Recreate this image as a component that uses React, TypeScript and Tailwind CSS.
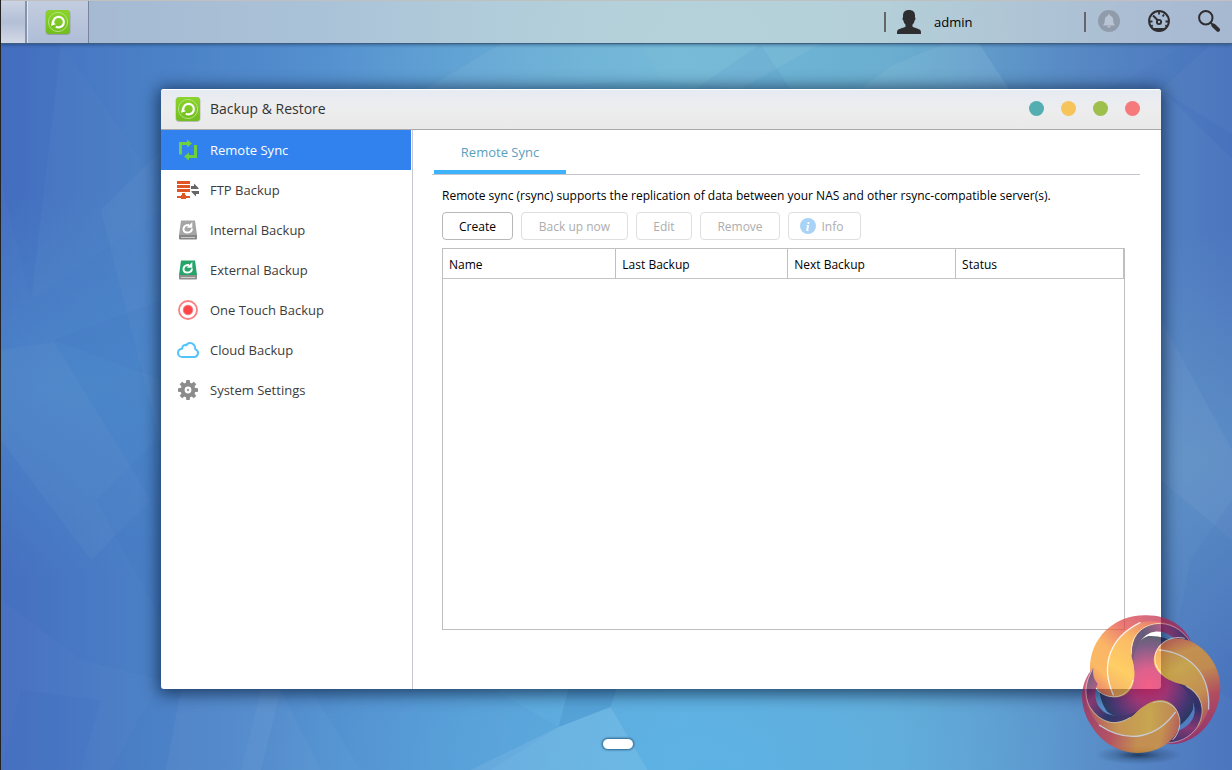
import type { ComponentType } from "react";

function AppIcon() {
  return (
    <svg width="26" height="26" viewBox="0 0 26 26" fill="none" aria-hidden="true">
      <defs>
        <linearGradient id="app-green" x1="0" y1="0" x2="0" y2="1">
          <stop offset="0" stopColor="#8ad42a" />
          <stop offset="1" stopColor="#72bd20" />
        </linearGradient>
      </defs>
      <rect x="0.5" y="1" width="25" height="25" rx="4" fill="#5c6b50" opacity="0.35" />
      <rect x="1" y="1" width="24" height="24" rx="3.5" fill="url(#app-green)" />
      <circle cx="13" cy="13" r="9.6" stroke="#b4e27c" strokeWidth="1" />
      <path d="M8.3 13.600A5.300 5.300 0 1 1 10.800 17.600" stroke="#fff" strokeWidth="2.200" />
      <path d="M6 16.800l1-4.800 3.800 3.200z" fill="#fff" />
    </svg>
  );
}

function SyncIcon() {
  return (
    <svg width="22" height="22" viewBox="0 0 22 22" fill="#6fcf3c" aria-hidden="true">
      <path d="M2 3h8V0.500l5 4-5 4V6H5v9.500H2z" />
      <path d="M20 19h-8v2.500l-5-4 5-4V16h5V6h3z" />
    </svg>
  );
}

function FtpIcon() {
  return (
    <svg width="22" height="22" viewBox="0 0 22 22" aria-hidden="true">
      <path d="M0 2h13v3H0zM0 6h13v3H0zM0 10h13v3H0zM5 14h3v2h1v1h4v2H9v1H4v-1H0v-2h4v-1h1z" fill="#df5523" />
      <path d="M14 7h3V4.500L21.500 9v1H14zM22 15h-3v2.500L14.500 13v-1H22z" fill="#666" />
    </svg>
  );
}

function DriveIcon({ top, base, slot }: { top: string; base: string; slot: string }) {
  return (
    <svg width="22" height="22" viewBox="0 0 22 22" fill="none" aria-hidden="true">
      <path d="M4 1.500h14l2 14.500H2z" fill={top} />
      <path d="M2 16h18v3.500q0 1-1 1H3q-1 0-1-1z" fill={base} />
      <path d="M4 18.500h14" stroke={slot} />
      <path d="M15 9.500c-.2 2.600-2 4-4.300 4-2.500 0-4.200-1.500-4.200-3.600 0-2.400 2.200-4 5.500-3.900" stroke="#fff" strokeWidth="2" />
      <path d="M15.300 3v5.800H9.800z" fill="#fff" />
    </svg>
  );
}

const InternalIcon = () => <DriveIcon top="#a5a5a5" base="#868686" slot="#c9c9c9" />;
const ExternalIcon = () => <DriveIcon top="#25a56a" base="#8e8e8e" slot="#d0d0d0" />;

function TouchIcon() {
  return (
    <svg width="22" height="22" viewBox="0 0 22 22" fill="none" aria-hidden="true">
      <circle cx="11" cy="11" r="9" stroke="#f97f82" strokeWidth="1.800" />
      <circle cx="11" cy="11" r="4.800" fill="#fb4549" stroke="#f97f82" />
    </svg>
  );
}

function CloudIcon() {
  return (
    <svg width="22" height="22" viewBox="0 0 22 22" fill="none" aria-hidden="true">
      <path
        d="M5.200 18h12a3.900 3.900 0 0 0 1.100-7.600C18.600 6.400 15.800 4 13 4c-1.500 0-2.900.8-3.500 2.200C7.200 5.400 5 6.900 5.200 9.700 2.600 10 1 11.700 1 13.900 1 16.200 2.800 18 5.200 18z"
        stroke="#55c3fb"
        strokeWidth="2"
        strokeLinejoin="round"
      />
    </svg>
  );
}

function GearIcon() {
  return (
    <svg width="22" height="22" viewBox="0 0 22 22" fill="none" aria-hidden="true">
      <circle cx="11" cy="11" r="5.400" stroke="#8c8c8c" strokeWidth="4" />
      <g fill="#8c8c8c">
        {[0, 45, 90, 135, 180, 225, 270, 315].map((a) => (
          <path key={a} d="M8.800 5L9.300 1h3.400l.5 4z" transform={`rotate(${a} 11 11)`} />
        ))}
      </g>
      <circle cx="11" cy="11" r="1.200" fill="#a0a0a0" />
    </svg>
  );
}

function UserIcon() {
  return (
    <svg width="24" height="24" viewBox="0 0 24 24" fill="#2e2e31" aria-hidden="true">
      <path d="M12 0c4 0 6 2.200 6 5.500v2c.8.3.7 2.500-.4 3-.3 2-1 3.100-2.100 4v2.200c1 1 7 1.800 8.100 3.700.4.700.4 2 .4 3.600H0c0-1.600 0-2.900.4-3.600 1.100-1.900 7.100-2.700 8.100-3.700v-2.200c-1.100-.9-1.800-2-2.100-4-1.100-.5-1.200-2.700-.4-3v-2C6 2.200 8 0 12 0z" />
    </svg>
  );
}

function BellIcon() {
  return (
    <svg width="22" height="22" viewBox="0 0 22 22" aria-hidden="true">
      <circle cx="11" cy="11" r="11" fill="#909cab" />
      <path d="M11 4.500c.8 0 1.200.5 1.200 1.200 2.200.6 3 2.300 3 4.500 0 2.500.4 3.500 1.500 4.500v.8H5.300v-.8c1.100-1 1.500-2 1.500-4.500 0-2.200.8-3.900 3-4.500 0-.7.400-1.200 1.200-1.200zM9.500 16h3c0 1-.7 1.500-1.500 1.500S9.500 17 9.500 16z" fill="#b8c4d3" />
    </svg>
  );
}

function GaugeIcon() {
  return (
    <svg width="22" height="22" viewBox="0 0 22 22" fill="none" stroke="#2e2e31" aria-hidden="true">
      <circle cx="11" cy="11" r="9.900" strokeWidth="2" />
      <path d="M3.500 18h15A10 10 0 0 1 11 21.500 10 10 0 0 1 3.500 18z" fill="#2e2e31" stroke="none" />
      <path d="M11 2v2.500M2 11.500h2.500M17.500 11.500H20M16 4.500l-1.400 2M17.300 15.300l1.200 1M4.700 15.300l-1.200 1" strokeWidth="1.800" />
      <path d="M5 5.500l5 5" strokeWidth="1.900" />
      <circle cx="11" cy="12" r="2.100" strokeWidth="1.900" />
    </svg>
  );
}

function SearchIcon() {
  return (
    <svg width="22" height="22" viewBox="0 0 22 22" fill="none" stroke="#2e2e31" aria-hidden="true">
      <circle cx="7.800" cy="7.800" r="6.700" strokeWidth="2" />
      <path d="M12.500 12.500l3 3" strokeWidth="2" />
      <path d="M15.500 15.500l4.500 4.300" strokeWidth="4" strokeLinecap="round" />
    </svg>
  );
}

// Faceted desktop wallpaper, stretched over the whole page
function Wallpaper() {
  return (
    <svg className="absolute inset-0 h-full w-full" viewBox="0 0 1232 770" preserveAspectRatio="none" aria-hidden="true">
      <defs>
        <linearGradient id="wp-base" x1="0" y1="0" x2="1" y2="0">
          <stop offset="0" stopColor="#466fc0" />
          <stop offset="0.12" stopColor="#4a80c6" />
          <stop offset="0.3" stopColor="#5794d1" />
          <stop offset="0.55" stopColor="#65b0da" />
          <stop offset="0.72" stopColor="#67a9cf" />
          <stop offset="0.88" stopColor="#5a8bc5" />
          <stop offset="1" stopColor="#4c76bf" />
        </linearGradient>
        <radialGradient id="wp-top" cx="0.56" cy="0.06" r="0.3">
          <stop offset="0" stopColor="#76bcd2" stopOpacity="0.6" />
          <stop offset="1" stopColor="#76bcd2" stopOpacity="0" />
        </radialGradient>
        <radialGradient id="wp-bottom" cx="0.58" cy="1" r="0.36">
          <stop offset="0" stopColor="#5cb2e6" stopOpacity="0.9" />
          <stop offset="1" stopColor="#5cb2e6" stopOpacity="0" />
        </radialGradient>
        <radialGradient id="wp-right" cx="0.97" cy="0.6" r="0.3">
          <stop offset="0" stopColor="#6498c8" stopOpacity="0.7" />
          <stop offset="1" stopColor="#6498c8" stopOpacity="0" />
        </radialGradient>
        <radialGradient id="wp-left" cx="0.05" cy="0.5" r="0.25">
          <stop offset="0" stopColor="#4c8acb" stopOpacity="0.8" />
          <stop offset="1" stopColor="#4c8acb" stopOpacity="0" />
        </radialGradient>
      </defs>
      <path d="M0 0h1232v770H0z" fill="url(#wp-base)" />
      <path d="M0 0h1232v770H0z" fill="url(#wp-top)" />
      <path d="M0 0h1232v770H0z" fill="url(#wp-bottom)" />
      <path d="M0 0h1232v770H0z" fill="url(#wp-right)" />
      <path d="M0 0h1232v770H0z" fill="url(#wp-left)" />
      <g fill="#fff">
        <path d="M60 44l110 160L30 300z" opacity="0.015" />
        <path d="M0 350l53-8 97 158-60 60L0 440z" opacity="0.03" />
        <path d="M100 210l61-60v300z" opacity="0.03" />
        <path d="M180 690h100l-20 80H165z" opacity="0.04" />
        <path d="M558 727l52-20 37 63H470z" opacity="0.09" />
        <path d="M500 44h140l20 36-240 12z" opacity="0.05" />
        <path d="M640 44h180l-80 45-80-9z" opacity="0.06" />
        <path d="M893 65l50-21h36l30 45H860z" opacity="0.06" />
        <path d="M1161 90l50-46h21v90z" opacity="0.03" />
        <path d="M1161 320l71 130v90l-71-60z" opacity="0.04" />
        <path d="M280 690h-20l-20 80h80z" opacity="0.03" />
        <path d="M0 600l80 60 80 20-50 90H0z" opacity="0.02" />
      </g>
      <g fill="#1c4fa8">
        <path d="M0 44h60L30 300 0 180z" opacity="0.04" />
        <path d="M53 340l108-40v80z" opacity="0.04" />
        <path d="M568 689h48l-6 18-52 20z" opacity="0.12" />
        <path d="M310 689l50 81h130l68-43-65-38z" opacity="0.04" />
        <path d="M760 44l30 45h-95z" opacity="0.05" />
        <path d="M979 44l30 45h100l72-41z" opacity="0.04" />
        <path d="M1181 48l-72 41h52l71 70V44z" opacity="0.08" />
        <path d="M95 500l60-60 6 180z" opacity="0.04" />
        <path d="M1190 560l42-60v200l-60-40z" opacity="0.06" />
        <path d="M20 690l80 10-20 70H0z" opacity="0.05" />
      </g>
    </svg>
  );
}

function KnotBlade({ angle }: { angle: number }) {
  return (
    <g transform={`rotate(${angle} 268 257)`}>
      <path
        d="M397 138C376 82 322 56 262 75 222 96 208 140 218 195 222 150 240 112 270 99 300 86 336 102 350 126 366 122 384 126 397 138z"
        fill="url(#knot-ring)"
      />
      <path
        d="M90 205C90 116 160 46 255 46 326 44 382 82 398 138 368 84 314 58 265 76 222 96 205 140 217 180 230 224 226 290 165 292 120 290 92 255 90 205z"
        fill="url(#knot-blade)"
      />
      <path d="M165 289C120 210 145 115 240 68 290 58 330 68 352 86 310 64 280 70 262 77 222 96 205 140 217 180 230 224 226 290 165 289z" fill="url(#knot-fold)" />
      <path d="M160 285C122 200 145 115 240 68" stroke="#fff" strokeWidth="4" strokeLinecap="round" fill="none" opacity="0.85" />
      <path d="M214 160C210 110 245 72 300 70" stroke="#ffe28a" strokeWidth="3" fill="none" opacity="0.8" />
      <path d="M300 70C345 72 375 98 394 132" stroke="#fff" strokeWidth="2" fill="none" opacity="0.7" />
      <path d="M92 236C104 276 140 296 175 289 200 282 214 262 219 240" stroke="#fff0c0" strokeWidth="3" fill="none" opacity="0.8" />
    </g>
  );
}

function KnotLogo() {
  return (
    <svg
      className="pointer-events-none absolute right-0 bottom-0 z-20"
      width="172"
      height="170"
      viewBox="0 0 516 510"
      role="img"
      aria-label="Knot logo"
    >
      <defs>
        <linearGradient id="knot-blade" gradientUnits="userSpaceOnUse" x1="110" y1="290" x2="330" y2="50">
          <stop offset="0" stopColor="#dc3a30" />
          <stop offset="0.2" stopColor="#fa9a1c" />
          <stop offset="0.4" stopColor="#f8941e" />
          <stop offset="0.65" stopColor="#e03a34" />
          <stop offset="1" stopColor="#b41848" />
        </linearGradient>
        <linearGradient id="knot-fold" gradientUnits="userSpaceOnUse" x1="160" y1="290" x2="300" y2="60">
          <stop offset="0" stopColor="#f08a24" />
          <stop offset="0.3" stopColor="#ffb81c" />
          <stop offset="0.65" stopColor="#fa9a1e" />
          <stop offset="1" stopColor="#d83038" />
        </linearGradient>
        <linearGradient id="knot-ring" gradientUnits="userSpaceOnUse" x1="215" y1="170" x2="395" y2="100">
          <stop offset="0" stopColor="#4a1040" />
          <stop offset="0.3" stopColor="#1a103f" />
          <stop offset="0.65" stopColor="#a01850" />
          <stop offset="1" stopColor="#15103f" />
        </linearGradient>
        <radialGradient id="knot-core" gradientUnits="userSpaceOnUse" cx="268" cy="257" r="155">
          <stop offset="0" stopColor="#f01450" />
          <stop offset="0.35" stopColor="#c81858" />
          <stop offset="0.75" stopColor="#4a1450" />
          <stop offset="1" stopColor="#0b1a30" />
        </radialGradient>
        <radialGradient id="knot-shadow">
          <stop offset="0" stopColor="#0f2440" stopOpacity="0.75" />
          <stop offset="0.5" stopColor="#0f2440" stopOpacity="0.25" />
          <stop offset="1" stopColor="#0f2440" stopOpacity="0" />
        </radialGradient>
      </defs>
      <ellipse cx="235" cy="465" rx="130" ry="28" fill="url(#knot-shadow)" />
      <g opacity="0.68">
        <circle cx="268" cy="257" r="95" fill="url(#knot-core)" />
        {[0, 120, 240].map((a) => (
          <path
            key={a}
            d="M268 257L205 230C205 160 232 118 265 108 295 106 325 114 350 132 310 140 280 170 310 240z"
            fill="url(#knot-core)"
            transform={`rotate(${a} 268 257)`}
          />
        ))}
        <KnotBlade angle={0} />
        <KnotBlade angle={120} />
        <KnotBlade angle={240} />
      </g>
    </svg>
  );
}

const NAV_ITEMS: { label: string; icon: ComponentType }[] = [
  { label: "Remote Sync",      icon: SyncIcon },
  { label: "FTP Backup",       icon: FtpIcon },
  { label: "Internal Backup",  icon: InternalIcon },
  { label: "External Backup",  icon: ExternalIcon },
  { label: "One Touch Backup", icon: TouchIcon },
  { label: "Cloud Backup",     icon: CloudIcon },
  { label: "System Settings",  icon: GearIcon },
];

const WINDOW_BUTTONS = [
  { label: "Help",     color: "bg-[#52aeb0]" },
  { label: "Minimize", color: "bg-[#f7c35b]" },
  { label: "Maximize", color: "bg-[#9dbf4b]" },
  { label: "Close",    color: "bg-[#f6797c]" },
];

const ACTIONS = [
  { label: "Create",      width: "w-[71px]",  enabled: true },
  { label: "Back up now", width: "w-[107px]", enabled: false },
  { label: "Edit",        width: "w-[56px]",  enabled: false },
  { label: "Remove",      width: "w-[80px]",  enabled: false },
  { label: "Info",        width: "w-[73px]",  enabled: false },
];

const COLUMNS = [
  { label: "Name",        width: "w-[173px]" },
  { label: "Last Backup", width: "w-[172px]" },
  { label: "Next Backup", width: "w-[168px]" },
  { label: "Status",      width: "w-[168px]" },
];

function TopBar() {
  return (
    <header className="relative flex h-11 items-stretch border-t border-b border-t-[#bfc0bf] border-b-[#3f5f80] bg-[#e4e4de]/60 shadow-[0_1px_3px_rgba(20,50,90,0.5)]">
      <button
        aria-label="Show desktop"
        className="w-[26px] border-r-2 border-[#8793a8] bg-linear-to-b from-[#cbd4e4] via-[#b3bfd6] to-[#d3d9e6]"
      />
      <button
        aria-label="Backup & Restore"
        className="flex w-[62px] items-center justify-center border-x border-l-white/60 border-r-[#77859c] bg-linear-to-b from-[#c3cde0] to-[#b0bdd7]"
      >
        <AppIcon />
      </button>

      <div className="ml-auto flex items-center pr-3">
        <span className="h-5 w-0.5 bg-[#66666a]" />
        <button className="ml-[11px] flex w-[187px] items-center gap-[13px] text-[13px] leading-5 text-black">
          <UserIcon />
          admin
        </button>
        <span className="h-5 w-0.5 bg-[#66666a]" />
        <div className="ml-3 flex gap-7 pb-0.5">
          <button aria-label="Notifications"><BellIcon /></button>
          <button aria-label="Dashboard"><GaugeIcon /></button>
          <button aria-label="Search"><SearchIcon /></button>
        </div>
      </div>
    </header>
  );
}

function Sidebar() {
  return (
    <nav className="w-[252px] shrink-0 border-r border-[#c6c8ce] pr-px">
      {NAV_ITEMS.map(({ label, icon: Icon }, i) => (
        <a
          key={label}
          href="#"
          className={`flex h-10 items-center gap-[11px] pl-4 text-[13px] leading-5 ${
            i === 0 ? "bg-[#3182ee] text-white" : "text-[#3c3c3c]"
          }`}
        >
          <Icon />
          {label}
        </a>
      ))}
    </nav>
  );
}

function RemoteSyncPanel() {
  return (
    <section className="flex min-w-0 flex-1 flex-col pr-[21px] pl-[19px]">
      <div role="tablist" className="flex border-b border-[#c3c6d0] pl-0.5">
        <button
          role="tab"
          aria-selected="true"
          className="h-11 w-[132px] border-b-4 border-[#3eb3fb] pt-1 text-[13px] leading-5 text-[#5b9fbe]"
        >
          Remote Sync
        </button>
      </div>

      <div className="flex flex-1 flex-col pt-3 pr-[15px] pb-[59px] pl-2.5">
        <p className="text-xs leading-[18px] text-black">
          Remote sync (rsync) supports the replication of data between your NAS and other rsync-compatible server(s).
        </p>

        <div className="mt-[7px] flex gap-2">
          {ACTIONS.map(({ label, width, enabled }) => (
            <button
              key={label}
              disabled={!enabled}
              className={`flex h-7 items-center justify-center gap-1.5 rounded border text-xs ${width} ${
                enabled ? "border-[#b8b8b8] text-black" : "border-[#dedede] text-[#adadad]"
              }`}
            >
              {label === "Info" && (
                <span className="-ml-1.5 flex size-4 items-center justify-center rounded-full bg-[#a9d3f6] font-['Liberation_Serif',serif] text-[13px] leading-none font-bold text-white italic">
                  i
                </span>
              )}
              <span className="pt-0.5">{label}</span>
            </button>
          ))}
        </div>

        <div className="mt-2 flex-1 border border-[#bfbfbf]">
          <table className="table-fixed border-collapse text-xs text-black">
            <thead>
              <tr className="h-[29px] border-b border-[#c4c4c4]">
                {COLUMNS.map(({ label, width }) => (
                  <th key={label} className={`border-r border-[#bfbfbf] pt-1 pl-1.5 text-left font-normal ${width}`}>
                    {label}
                  </th>
                ))}
              </tr>
            </thead>
            <tbody />
          </table>
        </div>
      </div>
    </section>
  );
}

export default function App() {
  return (
    <div className="relative flex min-h-screen flex-col overflow-hidden border-l border-[#222] font-['Open_Sans','Noto_Sans',sans-serif]">
      <Wallpaper />
      <TopBar />

      <main className="relative flex flex-1 flex-col pt-[45px] pr-[71px] pl-40">
        <div className="flex flex-1 flex-col overflow-hidden rounded-[3px] bg-white shadow-[0_2px_16px_3px_rgba(10,30,60,0.7)]">
          <div className="flex h-[41px] items-center border-t border-b border-t-white border-b-[#a9a9a9] bg-linear-to-b from-[#e6ebf2] via-[#ededee] to-[#e9e9e9] pr-[21px] pb-0.5 pl-3.5">
            <AppIcon />
            <h1 className="ml-[9px] text-sm text-[#333]">Backup &amp; Restore</h1>
            <div className="ml-auto flex gap-[17px]">
              {WINDOW_BUTTONS.map(({ label, color }) => (
                <button key={label} aria-label={label} className={`size-[15px] rounded-full ${color}`} />
              ))}
            </div>
          </div>

          <div className="flex flex-1">
            <Sidebar />
            <RemoteSyncPanel />
          </div>
        </div>
      </main>

      <footer className="relative flex h-[81px] justify-center pt-[49px] pl-0.5">
        <button
          aria-label="Desktop page 1"
          className="h-3 w-8 rounded-md border border-[#3f7ea8] bg-white shadow-[0_0_2px_rgba(20,60,90,0.8)]"
        />
      </footer>

      <KnotLogo />
    </div>
  );
}
